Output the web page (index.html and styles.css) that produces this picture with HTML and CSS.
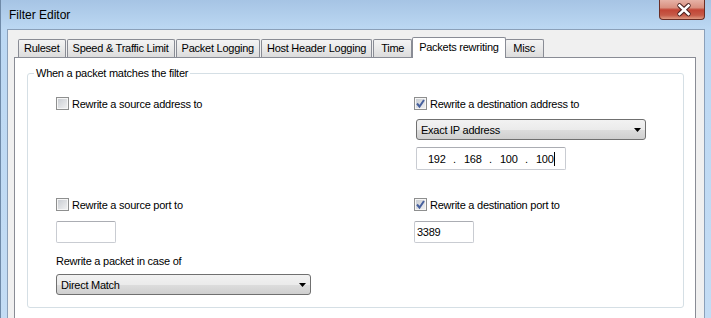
FILE: index.html
```html
<!DOCTYPE html>
<html lang="en">
<head>
    <meta charset="UTF-8">
    <title>Filter Editor</title>
    <link rel="stylesheet" href="styles.css">
</head>
<body>
    <div class="window">
        <div class="titlebar">
            <span class="title">Filter Editor</span>
            <div class="close-btn">
                <svg width="46" height="19" viewBox="0 0 46 19">
                    <path d="M19.5 5.5 L28.5 14 M28.5 5.5 L19.5 14" stroke="#4a2220" stroke-width="4.5" stroke-linecap="round"/>
                    <path d="M19.5 5.5 L28.5 14 M28.5 5.5 L19.5 14" stroke="#ffffff" stroke-width="2.5" stroke-linecap="square"/>
                </svg>
            </div>
        </div>

        <div class="client">
            <div class="tabs">
                <div class="tab">Ruleset</div>
                <div class="tab">Speed &amp; Traffic Limit</div>
                <div class="tab">Packet Logging</div>
                <div class="tab">Host Header Logging</div>
                <div class="tab">Time</div>
                <div class="tab active">Packets rewriting</div>
                <div class="tab">Misc</div>
            </div>

            <div class="tab-panel">
                <fieldset class="group">
                    <legend>When a packet matches the filter</legend>
                    <div class="group-body">
                        <div class="col">
                            <label class="check"><span class="box"></span>Rewrite a source address to</label>
                        </div>

                        <div class="col">
                            <label class="check">
                                <span class="box">
                                    <svg width="11" height="11" viewBox="0 0 11 11"><path d="M2 5.5 L4.5 8.5 L9 2" fill="none" stroke="#46609e" stroke-width="2"/></svg>
                                </span>Rewrite a destination address to
                            </label>
                            <div class="select wide">
                                <span>Exact IP address</span>
                                <svg width="7" height="4" viewBox="0 0 7 4"><polygon points="0,0 7,0 3.5,4" fill="#000"/></svg>
                            </div>
                            <div class="ip-box">
                                <span class="octet">192</span><span class="dot">.</span>
                                <span class="octet">168</span><span class="dot">.</span>
                                <span class="octet">100</span><span class="dot">.</span>
                                <span class="octet">100</span><span class="caret"></span>
                            </div>
                        </div>

                        <div class="col">
                            <label class="check"><span class="box"></span>Rewrite a source port to</label>
                            <div class="textbox"></div>
                            <div class="field-label">Rewrite a packet in case of</div>
                            <div class="select medium">
                                <span>Direct Match</span>
                                <svg width="7" height="4" viewBox="0 0 7 4"><polygon points="0,0 7,0 3.5,4" fill="#000"/></svg>
                            </div>
                        </div>

                        <div class="col">
                            <label class="check">
                                <span class="box">
                                    <svg width="11" height="11" viewBox="0 0 11 11"><path d="M2 5.5 L4.5 8.5 L9 2" fill="none" stroke="#46609e" stroke-width="2"/></svg>
                                </span>Rewrite a destination port to
                            </label>
                            <div class="textbox">3389</div>
                        </div>
                    </div>
                </fieldset>
            </div>
        </div>
    </div>
</body>
</html>
```

FILE: styles.css
```css
* {
    margin: 0;
    padding: 0;
    box-sizing: border-box;
}

body {
    font-family: 'Liberation Sans', Arial, sans-serif;
    font-size: 11px;
    letter-spacing: -0.25px;
    color: #000;
    background-color: #c0daf3;
    overflow: hidden;
}

.window {
    width: 712px;
    height: 318px;
    border-left: 1px solid #6f8aa8;
    padding: 0 7px 0 6px;
    background: linear-gradient(to bottom, #a6c4e4 0, #bcd8f3 29px, #c3dcf4 100%);
    overflow: hidden;
}

/* title bar */
.titlebar {
    height: 29px;
    display: flex;
    justify-content: space-between;
    align-items: flex-start;
}

.title {
    font-size: 12px;
    line-height: 14px;
    letter-spacing: 0;
    padding: 8px 0 0 2px;
}

.close-btn {
    width: 46px;
    height: 20px;
    border: 1px solid #6a2d25;
    border-top: none;
    border-radius: 0 0 4px 4px;
    background: linear-gradient(to bottom, #e6b2a6 0%, #d99080 40%, #c24535 52%, #c65a48 80%, #df9a82 100%);
}

.close-btn svg {
    display: block;
}

/* client area */
.client {
    height: 300px;
    background-color: #f0f0f0;
    border: 1px solid #8ba0b9;
    border-bottom: none;
    padding: 0 8px 0 6px;
}

.tabs {
    display: flex;
    align-items: flex-end;
    height: 27px;
    padding-left: 4px;
}

.tab {
    min-width: 39px;
    height: 18px;
    line-height: 17px;
    padding: 0 5px;
    margin-right: 1px;
    border: 1px solid #898c95;
    border-bottom: none;
    border-radius: 2px 2px 0 0;
    background: linear-gradient(to bottom, #f4f4f4, #e9e9e9 50%, #dcdcdc);
    text-align: center;
    white-space: nowrap;
}

.tab.active {
    position: relative;
    z-index: 1;
    height: 21px;
    line-height: 18px;
    padding: 0 6px;
    margin: 0 -1px -1px -1px;
    background: #fff;
}

.tab-panel {
    height: 280px;
    background-color: #fff;
    border: 1px solid #898c95;
    padding: 8px 11px 0 12px;
}

/* group box */
.group {
    border: 1px solid #d5dfe5;
    border-radius: 3px;
    padding: 0 6px 12px;
}

.group legend {
    padding: 0 2px;
    line-height: 15px;
}

.group-body {
    display: grid;
    grid-template-columns: 358px 1fr;
    row-gap: 27px;
    padding: 15px 0 0 22px;
}

.check {
    display: flex;
    align-items: center;
    gap: 3px;
    height: 15px;
    white-space: nowrap;
}

.box {
    width: 13px;
    height: 13px;
    border: 1px solid #8e8f8f;
    background: linear-gradient(135deg, #c6cad0, #f3f3f3);
    box-shadow: inset 0 0 0 1px #f6f6f6;
    flex-shrink: 0;
}

.box svg {
    display: block;
}

.select {
    display: flex;
    justify-content: space-between;
    align-items: center;
    height: 21px;
    padding: 0 4px;
    border: 1px solid #707070;
    border-radius: 3px;
    background: linear-gradient(to bottom, #f2f2f2 0, #ebebeb 50%, #dddddd 51%, #cfcfcf 100%);
}

.select.wide {
    width: 230px;
    margin: 8px 0 0 2px;
}

.select.medium {
    width: 255px;
    margin-top: 5px;
}

.ip-box {
    display: flex;
    align-items: center;
    width: 150px;
    height: 23px;
    margin: 7px 0 0 2px;
    padding-left: 11px;
    border: 1px solid #c9ccd2;
    border-top-color: #abadb3;
    border-radius: 2px;
}

.octet {
    width: 17px;
    text-align: center;
}

.dot {
    width: 19px;
    text-align: center;
}

.caret {
    width: 1px;
    height: 14px;
    margin-left: 1px;
    background-color: #000;
}

.textbox {
    width: 60px;
    height: 22px;
    margin-top: 9px;
    padding: 0 2px;
    line-height: 20px;
    border: 1px solid #c9ccd2;
    border-top-color: #abadb3;
    border-radius: 2px;
}

.field-label {
    margin-top: 11px;
    line-height: 15px;
}
```
